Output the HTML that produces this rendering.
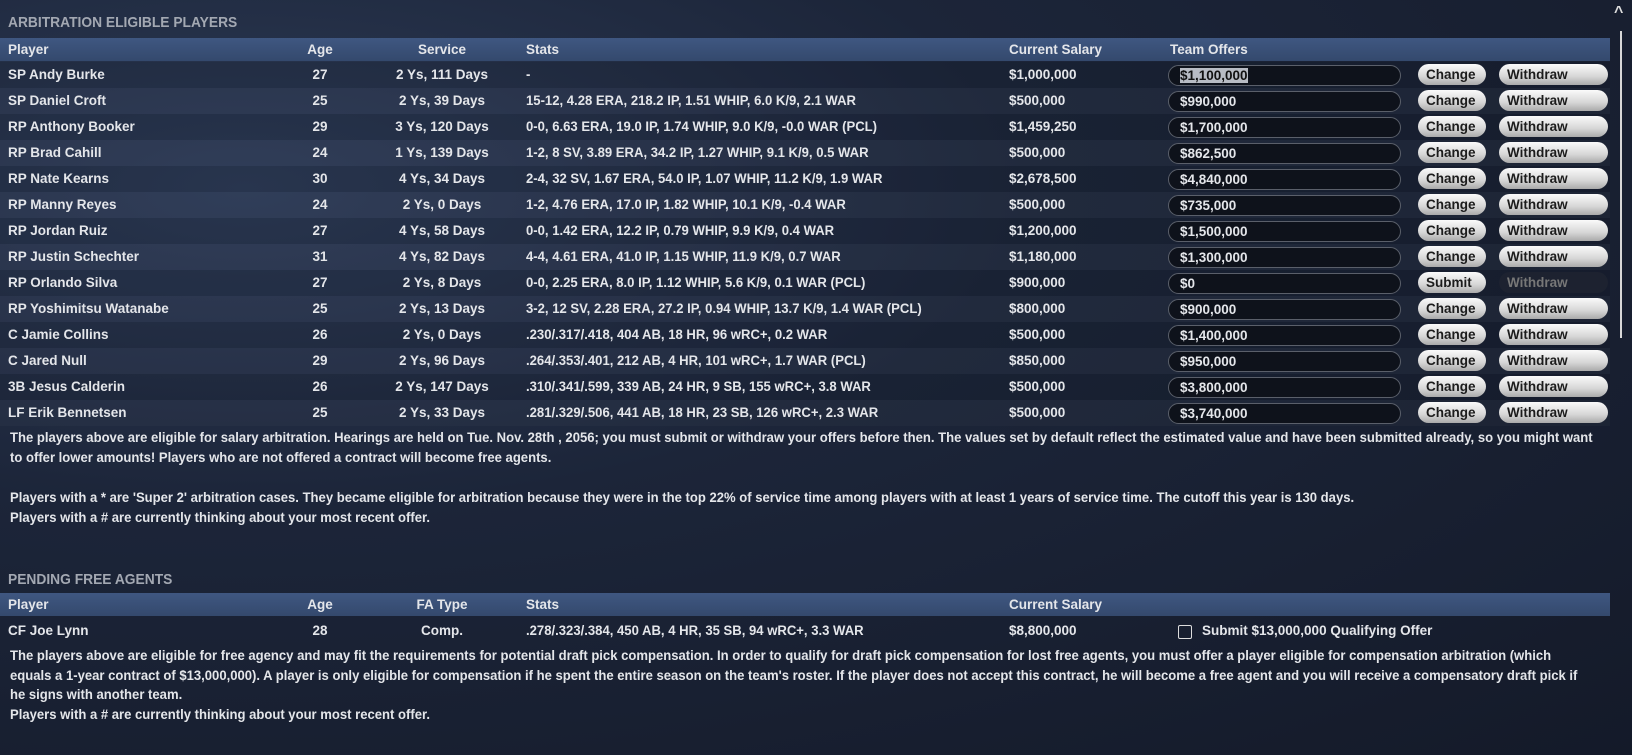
<!DOCTYPE html>
<html><head><meta charset="utf-8"><style>
*{margin:0;padding:0;box-sizing:border-box}
body{width:1632px;height:755px;overflow:hidden;font-family:"Liberation Sans",sans-serif;font-weight:bold;color:#e4e6ea;
background:radial-gradient(ellipse at 15% 25%,#2c3a55 0%,#1c2539 40%,#141a29 100%);position:relative;font-size:13.5px}
.a{position:absolute;white-space:nowrap}
.title{color:#a3a8b2;font-size:15px;left:8px;transform:scaleX(0.92);transform-origin:left}
.hdr{position:absolute;left:0;width:1610px;height:23px;background:linear-gradient(#3f5781,#34496d)}
.c{text-align:center}
.row{position:absolute;left:0;width:1610px;height:26px}
.in{position:absolute;left:1168px;width:233px;height:21px;border:1px solid #5a5f6a;border-radius:11px;background:#0e121b;padding-left:11px;line-height:19px;font-size:13.5px}
.btn{position:absolute;height:21px;border-radius:11px;background:linear-gradient(#fafafa,#d6d6d6 60%,#aaa);color:#1c1c1c;line-height:21px;padding-left:8px;font-size:13.5px}
.p{left:10px;font-size:14px;line-height:19.5px;transform:scaleX(0.934);transform-origin:left top}
.s{transform:scaleX(0.97);transform-origin:left}
</style></head><body>
<div class="a" style="left:1614px;top:4px;font-size:16px;color:#ddd">^</div>
<div class="a" style="left:1620px;top:31px;width:2px;height:307px;background:#d8d8d8"></div>
<div class="a title" style="top:14px">ARBITRATION ELIGIBLE PLAYERS</div>
<div class="hdr" style="top:38px"></div>
<div class="a" style="top:42px;left:8px">Player</div>
<div class="a c" style="top:42px;left:290px;width:60px">Age</div>
<div class="a c" style="top:42px;left:392px;width:100px">Service</div>
<div class="a" style="top:42px;left:526px">Stats</div>
<div class="a" style="top:42px;left:1009px">Current Salary</div>
<div class="a" style="top:42px;left:1170px">Team Offers</div>
<div id="rows"></div>
<div class="a p" style="top:428px">The players above are eligible for salary arbitration. Hearings are held on Tue. Nov. 28th , 2056; you must submit or withdraw your offers before then. The values set by default reflect the estimated value and have been submitted already, so you might want<br>to offer lower amounts! Players who are not offered a contract will become free agents.</div>
<div class="a p" style="top:488px">Players with a * are 'Super 2' arbitration cases. They became eligible for arbitration because they were in the top 22% of service time among players with at least 1 years of service time. The cutoff this year is 130 days.<br>Players with a # are currently thinking about your most recent offer.</div>
<div class="a title" style="top:571px">PENDING FREE AGENTS</div>
<div class="hdr" style="top:593px"></div>
<div class="a" style="top:597px;left:8px">Player</div>
<div class="a c" style="top:597px;left:290px;width:60px">Age</div>
<div class="a c" style="top:597px;left:392px;width:100px">FA Type</div>
<div class="a" style="top:597px;left:526px">Stats</div>
<div class="a" style="top:597px;left:1009px">Current Salary</div>
<div class="a" style="top:623px;left:8px">CF Joe Lynn</div>
<div class="a c" style="top:623px;left:290px;width:60px">28</div>
<div class="a c" style="top:623px;left:392px;width:100px">Comp.</div>
<div class="a s" style="top:623px;left:526px">.278/.323/.384, 450 AB, 4 HR, 35 SB, 94 wRC+, 3.3 WAR</div>
<div class="a" style="top:623px;left:1009px">$8,800,000</div>
<div class="a" style="top:625px;left:1178px;width:14px;height:14px;border:1.5px solid #ddd;border-radius:2px"></div>
<div class="a" style="top:623px;left:1202px">Submit $13,000,000 Qualifying Offer</div>
<div class="a p" style="top:646px">The players above are eligible for free agency and may fit the requirements for potential draft pick compensation. In order to qualify for draft pick compensation for lost free agents, you must offer a player eligible for compensation arbitration (which<br>equals a 1-year contract of $13,000,000). A player is only eligible for compensation if he spent the entire season on the team's roster. If the player does not accept this contract, he will become a free agent and you will receive a compensatory draft pick if<br>he signs with another team.<br>Players with a # are currently thinking about your most recent offer.</div>
<script>
var d=[["SP Andy Burke",27,"2 Ys, 111 Days","-","$1,000,000","$1,100,000"],
["SP Daniel Croft",25,"2 Ys, 39 Days","15-12, 4.28 ERA, 218.2 IP, 1.51 WHIP, 6.0 K/9, 2.1 WAR","$500,000","$990,000"],
["RP Anthony Booker",29,"3 Ys, 120 Days","0-0, 6.63 ERA, 19.0 IP, 1.74 WHIP, 9.0 K/9, -0.0 WAR (PCL)","$1,459,250","$1,700,000"],
["RP Brad Cahill",24,"1 Ys, 139 Days","1-2, 8 SV, 3.89 ERA, 34.2 IP, 1.27 WHIP, 9.1 K/9, 0.5 WAR","$500,000","$862,500"],
["RP Nate Kearns",30,"4 Ys, 34 Days","2-4, 32 SV, 1.67 ERA, 54.0 IP, 1.07 WHIP, 11.2 K/9, 1.9 WAR","$2,678,500","$4,840,000"],
["RP Manny Reyes",24,"2 Ys, 0 Days","1-2, 4.76 ERA, 17.0 IP, 1.82 WHIP, 10.1 K/9, -0.4 WAR","$500,000","$735,000"],
["RP Jordan Ruiz",27,"4 Ys, 58 Days","0-0, 1.42 ERA, 12.2 IP, 0.79 WHIP, 9.9 K/9, 0.4 WAR","$1,200,000","$1,500,000"],
["RP Justin Schechter",31,"4 Ys, 82 Days","4-4, 4.61 ERA, 41.0 IP, 1.15 WHIP, 11.9 K/9, 0.7 WAR","$1,180,000","$1,300,000"],
["RP Orlando Silva",27,"2 Ys, 8 Days","0-0, 2.25 ERA, 8.0 IP, 1.12 WHIP, 5.6 K/9, 0.1 WAR (PCL)","$900,000","$0"],
["RP Yoshimitsu Watanabe",25,"2 Ys, 13 Days","3-2, 12 SV, 2.28 ERA, 27.2 IP, 0.94 WHIP, 13.7 K/9, 1.4 WAR (PCL)","$800,000","$900,000"],
["C Jamie Collins",26,"2 Ys, 0 Days",".230/.317/.418, 404 AB, 18 HR, 96 wRC+, 0.2 WAR","$500,000","$1,400,000"],
["C Jared Null",29,"2 Ys, 96 Days",".264/.353/.401, 212 AB, 4 HR, 101 wRC+, 1.7 WAR (PCL)","$850,000","$950,000"],
["3B Jesus Calderin",26,"2 Ys, 147 Days",".310/.341/.599, 339 AB, 24 HR, 9 SB, 155 wRC+, 3.8 WAR","$500,000","$3,800,000"],
["LF Erik Bennetsen",25,"2 Ys, 33 Days",".281/.329/.506, 441 AB, 18 HR, 23 SB, 126 wRC+, 2.3 WAR","$500,000","$3,740,000"]];
var h="";
d.forEach(function(r,i){var t=62+26*i,y=t+5;
h+='<div class="row" style="top:'+t+'px;background:'+(i%2?'rgba(255,255,255,0.025)':'rgba(0,0,0,0.08)')+'"></div>';
h+='<div class="a" style="top:'+y+'px;left:8px">'+r[0]+'</div>';
h+='<div class="a c" style="top:'+y+'px;left:290px;width:60px">'+r[1]+'</div>';
h+='<div class="a c" style="top:'+y+'px;left:392px;width:100px">'+r[2]+'</div>';
h+='<div class="a s" style="top:'+y+'px;left:526px">'+r[3]+'</div>';
h+='<div class="a" style="top:'+y+'px;left:1009px">'+r[4]+'</div>';
h+='<div class="in" style="top:'+(t+3)+'px">'+(i==0?'<span style="background:#b8bcc4;color:#111">'+r[5]+'</span>':r[5])+'</div>';
h+='<div class="btn" style="top:'+(t+2)+'px;left:1418px;width:68px">'+(i==8?'Submit':'Change')+'</div>';
if(i==8)h+='<div class="btn" style="top:'+(t+2)+'px;left:1499px;width:109px;background:#1d2230;color:#777;padding-left:8px">Withdraw</div>';
else h+='<div class="btn" style="top:'+(t+2)+'px;left:1499px;width:109px">Withdraw</div>';
});
document.getElementById("rows").innerHTML=h;
</script>
</body></html>
